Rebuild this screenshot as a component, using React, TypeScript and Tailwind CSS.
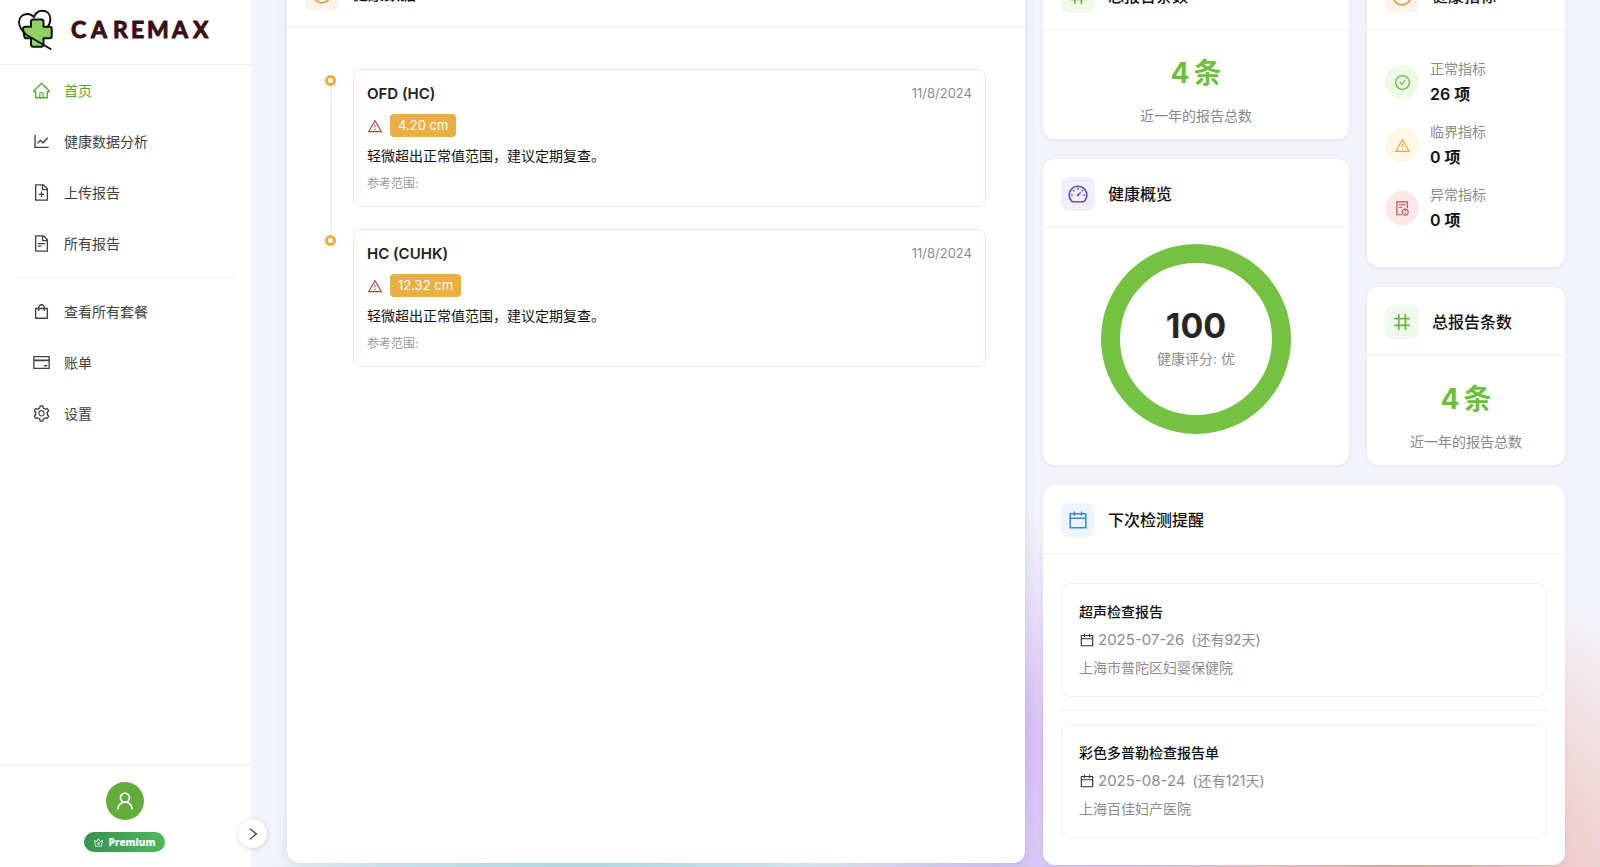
import type { ReactNode } from 'react';
import type { IconType } from 'react-icons';
import {
  AiOutlineHome,
  AiOutlineLineChart,
  AiOutlineFileAdd,
  AiOutlineFileText,
  AiOutlineShopping,
  AiOutlineCreditCard,
  AiOutlineSetting,
  AiOutlineUser,
  AiOutlineCrown,
  AiOutlineRight,
  AiOutlineCalendar,
  AiOutlineDashboard,
  AiOutlineNumber,
  AiOutlineCheckCircle,
  AiOutlineWarning,
  AiOutlineException,
  AiOutlineClockCircle,
} from 'react-icons/ai';

type NavEntry = { label: string; icon: IconType; active?: boolean };

const primaryNav: NavEntry[] = [
  { label: '首页', icon: AiOutlineHome, active: true },
  { label: '健康数据分析', icon: AiOutlineLineChart },
  { label: '上传报告', icon: AiOutlineFileAdd },
  { label: '所有报告', icon: AiOutlineFileText },
];

const secondaryNav: NavEntry[] = [
  { label: '查看所有套餐', icon: AiOutlineShopping },
  { label: '账单', icon: AiOutlineCreditCard },
  { label: '设置', icon: AiOutlineSetting },
];

const trend = [
  { name: 'OFD (HC)', value: '4.20 cm', date: '11/8/2024' },
  { name: 'HC (CUHK)', value: '12.32 cm', date: '11/8/2024' },
];

const indicators = [
  { label: '正常指标', value: '26 项', icon: AiOutlineCheckCircle, tone: 'bg-[#edfae6] text-[#63b545]' },
  { label: '临界指标', value: '0 项', icon: AiOutlineWarning, tone: 'bg-[#fff7e8] text-[#e9ac41]' },
  { label: '异常指标', value: '0 项', icon: AiOutlineException, tone: 'bg-[#fde7e8] text-[#cf4450]' },
];

const reminders = [
  { title: '超声检查报告', date: '2025-07-26', left: '(还有92天)', place: '上海市普陀区妇婴保健院' },
  { title: '彩色多普勒检查报告单', date: '2025-08-24', left: '(还有121天)', place: '上海百佳妇产医院' },
];

function Logo() {
  return (
    <svg viewBox="0 0 200 44" className="h-11 w-[200px]" role="img" aria-label="CareMax">
      <g strokeLinecap="round" strokeLinejoin="round">
        <path
          d="M15 11.5h8.3q2.2 0 2.2 2.2v5h6q2.2 0 2.2 2.2v7.2q0 2.2-2.2 2.2h-6v6q0 2.4-2.2 2.4h-8.1q-2.2 0-2.2-2.4v-6H8.6q-2 0-2.3-2l-1.2-7.2q-.2-2.4 2-2.4H13v-5q0-2.2 2-2.2z"
          fill="#8fd162"
          stroke="#111"
          strokeWidth="2"
        />
        <path
          d="M32.5 41 L8 26.5 C3 22 1 18 1 14 C1 9 5 6 9.5 6 C12 6 14.5 7.2 16 9.2 C17.5 5 20 2.8 24 2.8 C29 2.8 32.3 6 32.3 11 C32.3 14.5 31.5 17 29.5 19"
          fill="none"
          stroke="#111"
          strokeWidth="1.9"
        />
      </g>
      <text
        y="30"
        x="53 73 95 113 129 154 175"
        fill="#3a1017"
        stroke="#3a1017"
        strokeWidth="1"
        strokeLinejoin="round"
        className="font-[Lato,sans-serif] text-[23px] font-bold"
      >
        CAREMAX
      </text>
    </svg>
  );
}

function NavItem({ label, icon: Icon, active }: NavEntry) {
  return (
    <li>
      <a
        href="#"
        className={`flex h-[51px] items-center gap-[13px] px-8 text-sm ${active ? 'text-[#52ab2e]' : 'text-[#404040]'}`}
      >
        <Icon className="size-[19px]" />
        {label}
      </a>
    </li>
  );
}

function Card({ children, className = '' }: { children: ReactNode; className?: string }) {
  return (
    <section className={`rounded-xl bg-white shadow-[0_1px_5px_rgba(30,40,90,0.07)] ${className}`}>{children}</section>
  );
}

function CardHeader({ title, icon: Icon, tone }: { title: string; icon: IconType; tone: string }) {
  return (
    <header className="flex h-[69px] items-center gap-[13px] border-b border-[#f0f0f2] px-[18px] pt-px">
      <span className={`flex size-[34px] items-center justify-center rounded-lg ${tone}`}>
        <Icon className="size-[22px]" />
      </span>
      <h2 className="text-base font-medium text-[#111]">{title}</h2>
    </header>
  );
}

function ReportCount() {
  return (
    <Card>
      <CardHeader title="总报告条数" icon={AiOutlineNumber} tone="bg-[#f0faec] text-[#63bb3c]" />
      <div className="flex h-[109px] flex-col items-center gap-3 pt-[23px] text-center">
        <p className="flex gap-1 text-[28px] leading-10 font-bold text-[#6abf3b]">
          <span>4</span>
          <span>条</span>
        </p>
        <p className="text-sm leading-[22px] text-[#888]">近一年的报告总数</p>
      </div>
    </Card>
  );
}

export default function App() {
  return (
    <div className="flex h-screen overflow-hidden bg-[#f3f4f9] font-[Inter,'Noto_Sans_CJK_SC',sans-serif] text-[#111]">
      <aside className="relative z-10 flex w-[251px] shrink-0 flex-col bg-white">
        <div className="flex h-[65px] items-center border-b border-[#f0f0f2] pb-1 pl-[18px]">
          <Logo />
        </div>
        <nav className="flex-1">
          <ul>
            {primaryNav.map((item) => (
              <NavItem key={item.label} {...item} />
            ))}
          </ul>
          <hr className="mx-4 my-2 border-[#f0f0f0]" />
          <ul>
            {secondaryNav.map((item) => (
              <NavItem key={item.label} {...item} />
            ))}
          </ul>
        </nav>
        <div className="flex h-[103px] flex-col items-center gap-3 border-t border-[#f0f0f2] pt-[17px] pr-0.5">
          <span className="flex size-[38px] items-center justify-center rounded-full bg-[#62ac3b] text-white">
            <AiOutlineUser className="size-[22px]" />
          </span>
          <span className="flex h-5 items-center gap-1 rounded-full bg-gradient-to-r from-[#35924f] to-[#50b95a] px-[9px] font-['Open_Sans',sans-serif] text-[10px] font-extrabold text-white">
            <AiOutlineCrown className="size-[11px]" />
            Premium
          </span>
        </div>
        <button
          type="button"
          aria-label="展开"
          className="absolute -right-4 bottom-[19px] flex size-[29px] items-center justify-center rounded-full bg-white text-[#444] shadow-[0_1px_5px_rgba(0,0,0,0.16)]"
        >
          <AiOutlineRight className="size-4" />
        </button>
      </aside>

      <main className="h-screen flex-1 overflow-hidden bg-[radial-gradient(circle_at_58%_86%,#d8c0f3_0,#d8c0f300_230px),radial-gradient(circle_at_86%_106%,#e29a92_0,#eeb8b6b0_160px,#f3c8c800_350px),radial-gradient(circle_at_62%_106%,#c6c2f2_0,#c6c2f200_300px),radial-gradient(circle_at_24%_115%,#9ddbe8_0,#9ddbe800_340px)] pr-[35px] pl-9">
        <div className="-mt-[39px] grid grid-cols-12 gap-[18px]">
          <section className="col-span-7 -translate-y-0.5 rounded-xl bg-white shadow-[0_2px_12px_rgba(30,40,90,0.12)]">
            <CardHeader title="健康数据" icon={AiOutlineClockCircle} tone="bg-[#fdf3ea] text-[#e09a45]" />
            <ol className="pt-[41px] pr-[39px] pl-[38px]">
              {trend.map((item, index) => (
                <li key={item.name} className="flex gap-[17px]">
                  <div className="flex w-[11px] flex-col items-center">
                    <span className={`h-1.5 w-0.5 shrink-0 ${index > 0 ? 'bg-[#f0f0f0]' : ''}`} />
                    <span className="size-[11px] shrink-0 rounded-full border-3 border-[#e8ad3b] bg-white" />
                    {index < trend.length - 1 && <span className="w-0.5 flex-1 bg-[#f0f0f0]" />}
                  </div>
                  <article className="mb-[22px] h-[138px] flex-1 rounded-lg border border-[#fbe1e5] px-[13px] pt-3">
                    <div className="flex h-6 items-center justify-between">
                      <h3 className="text-[15px] font-semibold text-[#222]">{item.name}</h3>
                      <time className="text-[13px] text-[#8c8c8c]">{item.date}</time>
                    </div>
                    <div className="mt-2 flex items-center gap-[7px]">
                      <AiOutlineWarning className="size-4 text-[#b8433a]" />
                      <span className="flex h-[23px] items-center rounded bg-[#eaae42] px-2 text-[13px] text-white">
                        {item.value}
                      </span>
                    </div>
                    <p className="mt-2 text-sm leading-[22px]">轻微超出正常值范围，建议定期复查。</p>
                    <p className="mt-[7px] text-xs leading-5 text-[#999]">参考范围:</p>
                  </article>
                </li>
              ))}
            </ol>
          </section>

          <div className="col-span-5 grid grid-cols-5 gap-x-[18px] gap-y-5">
            <div className="col-span-3 flex flex-col gap-5">
              <ReportCount />
              <Card>
                <CardHeader title="健康概览" icon={AiOutlineDashboard} tone="bg-[#f1effd] text-[#5f50c0]" />
                <div className="flex h-[237px] justify-center pt-4">
                  <div className="flex size-[190px] flex-col items-center justify-center rounded-full border-[19px] border-[#73c242]">
                    <strong className="text-[34px] leading-10 font-bold text-[#262626]">100</strong>
                    <span className="text-sm leading-[26px] text-[#8c8c8c]">健康评分: 优</span>
                  </div>
                </div>
              </Card>
            </div>

            <div className="col-span-2 flex flex-col gap-5">
              <Card>
                <CardHeader title="健康指标" icon={AiOutlineClockCircle} tone="bg-[#fdf3ea] text-[#dc9748]" />
                <ul className="flex h-[237px] flex-col gap-[13px] px-[18px] pt-[27px]">
                  {indicators.map(({ label, value, icon: Icon, tone }) => (
                    <li key={label} className="flex h-[50px] items-center gap-[11px]">
                      <span className={`flex size-[34px] items-center justify-center rounded-full ${tone}`}>
                        <Icon className="size-[17px]" />
                      </span>
                      <div>
                        <p className="text-sm leading-6 text-[#8c8c8c]">{label}</p>
                        <p className="text-base leading-[26px] font-semibold">{value}</p>
                      </div>
                    </li>
                  ))}
                </ul>
              </Card>
              <ReportCount />
            </div>

            <Card className="col-span-5 pb-[27px]">
              <CardHeader title="下次检测提醒" icon={AiOutlineCalendar} tone="bg-[#edf6fe] text-[#3c86d8]" />
              <ul className="px-[18px] pt-[29px]">
                {reminders.map((item, index) => (
                  <li key={item.title}>
                    {index > 0 && <hr className="my-[13px] border-[#f0f0f2]" />}
                    <article className="rounded-lg border border-[#f0f0f2] px-[17px] py-[14px] text-sm leading-7 text-[#8c8c8c]">
                      <h3 className="font-medium text-[#111]">{item.title}</h3>
                      <p className="flex items-center gap-[3px] text-[15px] leading-7">
                        <AiOutlineCalendar className="size-4 text-[#333]" />
                        <time>{item.date}</time>
                        <span className="ml-1 text-sm leading-7">{item.left}</span>
                      </p>
                      <p>{item.place}</p>
                    </article>
                  </li>
                ))}
              </ul>
            </Card>
          </div>
        </div>
      </main>
    </div>
  );
}
